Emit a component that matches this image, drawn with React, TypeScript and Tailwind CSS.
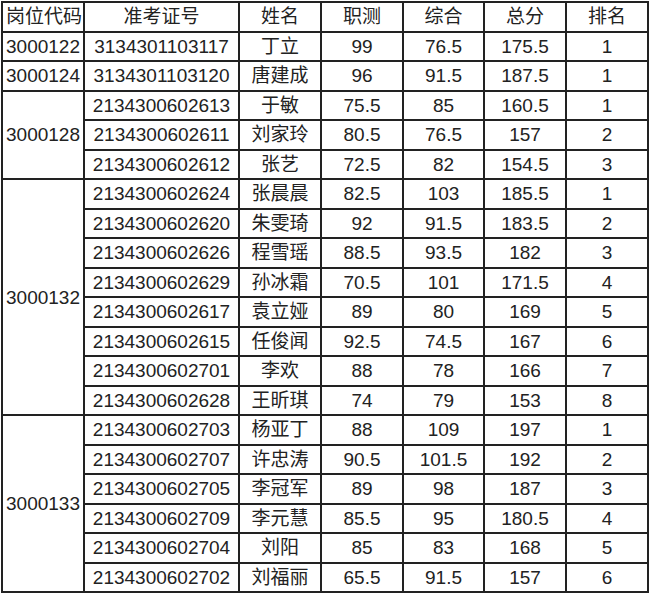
type Row = { id: string; name: string; a: string; b: string; total: string; rank: string };

const groups: { code: string; rows: Row[] }[] = [
  { code: '3000122', rows: [{ id: '3134301103117', name: '丁立', a: '99', b: '76.5', total: '175.5', rank: '1' }] },
  { code: '3000124', rows: [{ id: '3134301103120', name: '唐建成', a: '96', b: '91.5', total: '187.5', rank: '1' }] },
  {
    code: '3000128',
    rows: [
      { id: '2134300602613', name: '于敏', a: '75.5', b: '85', total: '160.5', rank: '1' },
      { id: '2134300602611', name: '刘家玲', a: '80.5', b: '76.5', total: '157', rank: '2' },
      { id: '2134300602612', name: '张艺', a: '72.5', b: '82', total: '154.5', rank: '3' },
    ],
  },
  {
    code: '3000132',
    rows: [
      { id: '2134300602624', name: '张晨晨', a: '82.5', b: '103', total: '185.5', rank: '1' },
      { id: '2134300602620', name: '朱雯琦', a: '92', b: '91.5', total: '183.5', rank: '2' },
      { id: '2134300602626', name: '程雪瑶', a: '88.5', b: '93.5', total: '182', rank: '3' },
      { id: '2134300602629', name: '孙冰霜', a: '70.5', b: '101', total: '171.5', rank: '4' },
      { id: '2134300602617', name: '袁立娅', a: '89', b: '80', total: '169', rank: '5' },
      { id: '2134300602615', name: '任俊闻', a: '92.5', b: '74.5', total: '167', rank: '6' },
      { id: '2134300602701', name: '李欢', a: '88', b: '78', total: '166', rank: '7' },
      { id: '2134300602628', name: '王昕琪', a: '74', b: '79', total: '153', rank: '8' },
    ],
  },
  {
    code: '3000133',
    rows: [
      { id: '2134300602703', name: '杨亚丁', a: '88', b: '109', total: '197', rank: '1' },
      { id: '2134300602707', name: '许忠涛', a: '90.5', b: '101.5', total: '192', rank: '2' },
      { id: '2134300602705', name: '李冠军', a: '89', b: '98', total: '187', rank: '3' },
      { id: '2134300602709', name: '李元慧', a: '85.5', b: '95', total: '180.5', rank: '4' },
      { id: '2134300602704', name: '刘阳', a: '85', b: '83', total: '168', rank: '5' },
      { id: '2134300602702', name: '刘福丽', a: '65.5', b: '91.5', total: '157', rank: '6' },
    ],
  },
];

const cell = 'border-2 border-[#222] p-0 text-center leading-none';

export default function App() {
  return (
    <div className="w-[650px] h-[593px] bg-white pt-px pl-px">
      <table
        className="w-[647px] table-fixed border-collapse text-[19px] text-[#222]"
        style={{ fontFamily: '"Liberation Sans", Arial, "Noto Sans CJK SC", sans-serif' }}
      >
        <colgroup>
          <col className="w-[82px]" />
          <col className="w-[155px]" />
          <col className="w-[82px]" />
          <col className="w-[82px]" />
          <col className="w-[81px]" />
          <col className="w-[82px]" />
          <col className="w-[82px]" />
        </colgroup>
        <tbody>
          <tr className="h-[29.5px]">
            <td className={`${cell} text-left pl-[3px]`}>岗位代码</td>
            <td className={cell}>准考证号</td>
            <td className={cell}>姓名</td>
            <td className={cell}>职测</td>
            <td className={cell}>综合</td>
            <td className={cell}>总分</td>
            <td className={cell}>排名</td>
          </tr>
          {groups.map((g) =>
            g.rows.map((r, i) => (
              <tr key={r.id} className="h-[29.5px]">
                {i === 0 && (
                  <td rowSpan={g.rows.length} className={`${cell} text-left pl-[3px]`}>
                    {g.code}
                  </td>
                )}
                <td className={cell}>{r.id}</td>
                <td className={cell}>{r.name}</td>
                <td className={cell}>{r.a}</td>
                <td className={cell}>{r.b}</td>
                <td className={cell}>{r.total}</td>
                <td className={cell}>{r.rank}</td>
              </tr>
            ))
          )}
        </tbody>
      </table>
    </div>
  );
}
